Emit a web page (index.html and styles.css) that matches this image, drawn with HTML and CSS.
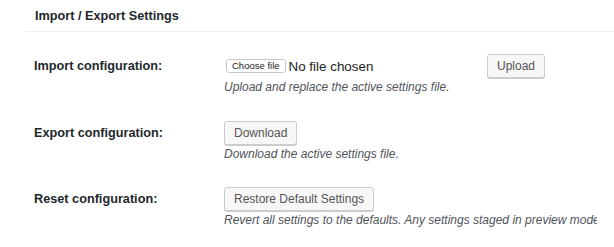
FILE: index.html
```html
<!DOCTYPE html>
<html>
<head>
<meta charset="utf-8">
<link rel="stylesheet" href="styles.css">
</head>
<body>
<div class="page">
  <h2 class="title">Import / Export Settings</h2>
  <div class="rows">
    <div class="row">
      <div class="label">Import configuration:</div>
      <div class="field">
        <div class="line">
          <div class="file">
            <span class="file-btn">Choose file</span>
            <span class="file-name">No file chosen</span>
          </div>
          <span class="btn">Upload</span>
        </div>
        <p class="desc">Upload and replace the active settings file.</p>
      </div>
    </div>
    <div class="row">
      <div class="label">Export configuration:</div>
      <div class="field">
        <div class="line"><span class="btn">Download</span></div>
        <p class="desc">Download the active settings file.</p>
      </div>
    </div>
    <div class="row">
      <div class="label">Reset configuration:</div>
      <div class="field">
        <div class="line"><span class="btn">Restore Default Settings</span></div>
        <p class="desc">Revert all settings to the defaults. Any settings staged in preview mode will be lost.</p>
      </div>
    </div>
  </div>
</div>
</body>
</html>
```
FILE: styles.css
```css
html, body {
  margin: 0;
  padding: 0;
  background: #fff;
}
body {
  font-family: "Liberation Sans", Arial, sans-serif;
  color: #23282d;
  width: 614px;
  height: 247px;
  overflow: hidden;
}
.page {
  padding-top: 9px;
}
.title {
  margin: 0 0 0 25px;
  padding: 0 0 7px 10px;
  font-size: 12.7px;
  line-height: 15px;
  font-weight: bold;
  border-bottom: 1px solid #eeeeee;
}
.rows {
  margin-top: 22px;
  display: flex;
  flex-direction: column;
  gap: 24.5px;
}
.row {
  display: grid;
  grid-template-columns: 190px 373px;
  padding-left: 34px;
}
.label {
  font-size: 12.7px;
  font-weight: bold;
  line-height: 25px;
  white-space: nowrap;
}
.field {
  min-width: 0;
}
.line {
  display: flex;
  align-items: center;
  height: 24px;
}
.file {
  width: 263px;
  display: flex;
  align-items: center;
  gap: 3px;
  padding-left: 2px;
  box-sizing: border-box;
}
.file-btn {
  box-sizing: border-box;
  height: 14px;
  padding: 0 5px;
  font-size: 9.5px;
  line-height: 12px;
  color: #222;
  background: #fff;
  border: 1px solid #c8c8c8;
  border-radius: 3px;
}
.file-name {
  font-size: 13.4px;
  color: #222;
}
.btn {
  box-sizing: border-box;
  height: 24px;
  padding: 0 9px;
  font-size: 12px;
  line-height: 22px;
  color: #555;
  background: #f7f7f7;
  border: 1px solid #cccccc;
  border-radius: 3px;
  box-shadow: 0 1px 0 #cccccc;
  white-space: nowrap;
}
.desc {
  margin: 0;
  font-size: 12px;
  line-height: 18px;
  font-style: italic;
  color: #50555a;
  white-space: nowrap;
  overflow: hidden;
}
```
